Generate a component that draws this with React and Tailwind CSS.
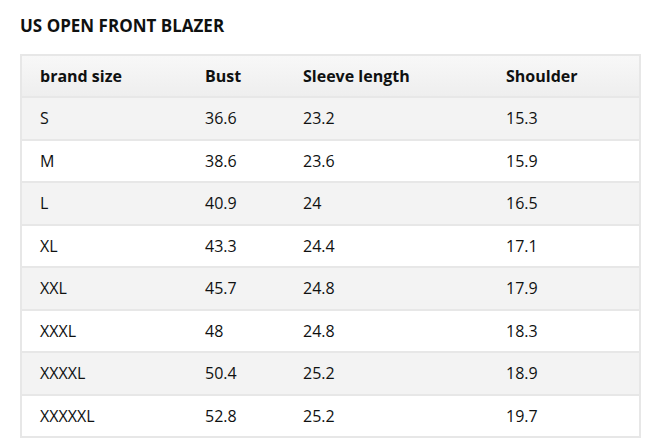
const rows = [
  ['S', '36.6', '23.2', '15.3'],
  ['M', '38.6', '23.6', '15.9'],
  ['L', '40.9', '24', '16.5'],
  ['XL', '43.3', '24.4', '17.1'],
  ['XXL', '45.7', '24.8', '17.9'],
  ['XXXL', '48', '24.8', '18.3'],
  ['XXXXL', '50.4', '25.2', '18.9'],
  ['XXXXXL', '52.8', '25.2', '19.7'],
];

export default function App() {
  return (
    <div className="w-[662px] h-[441px] bg-white overflow-hidden px-5 pt-[14px] font-['Open_Sans',sans-serif] text-[#0f1111]">
      <h2 className="text-[17px] font-bold leading-[24px]">US OPEN FRONT BLAZER</h2>
      <table className="mt-[16px] w-[621px] border-collapse border-2 border-[#e7e7e7] text-[16px] table-fixed">
        <colgroup>
          <col className="w-[165px]" />
          <col className="w-[98px]" />
          <col className="w-[203px]" />
          <col />
        </colgroup>
        <thead>
          <tr className="h-[42px] bg-gradient-to-b from-[#f8f8f8] to-[#eeeeee]">
            <th className="text-left font-bold pl-[18px]">brand size</th>
            <th className="text-left font-bold pl-[19px]">Bust</th>
            <th className="text-left font-bold pl-[19px]">Sleeve length</th>
            <th className="text-left font-bold pl-[19px]">Shoulder</th>
          </tr>
        </thead>
        <tbody>
          {rows.map((r, i) => (
            <tr key={r[0]} className={`h-[42.5px] border-t-2 border-[#e7e7e7] ${i % 2 === 0 ? 'bg-[#f3f3f3]' : 'bg-white'}`}>
              <td className="pl-[18px]">{r[0]}</td>
              <td className="pl-[19px]">{r[1]}</td>
              <td className="pl-[19px]">{r[2]}</td>
              <td className="pl-[19px]">{r[3]}</td>
            </tr>
          ))}
        </tbody>
      </table>
    </div>
  );
}
